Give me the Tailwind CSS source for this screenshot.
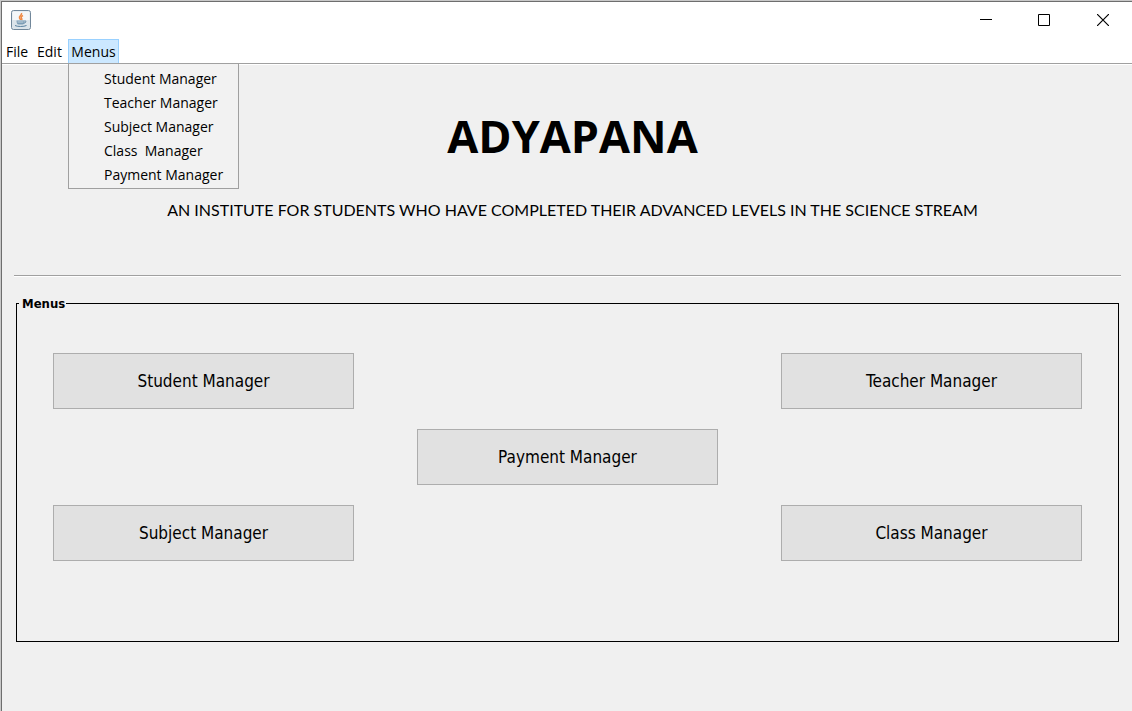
<!DOCTYPE html>
<html lang="en">
<head>
<meta charset="utf-8">
<title>Adyapana</title>
<script src="https://cdn.jsdelivr.net/npm/@tailwindcss/browser@4"></script>
</head>
<body class="min-h-screen bg-[#c8c8c8] pt-px pl-px text-black">
<div class="flex min-h-[calc(100vh-1px)] flex-col border-t border-l border-[#6e6e6e] bg-[#f0f0f0]">
  <header class="border-b border-[#a0a0a0] bg-white">
    <div class="flex h-[37px] items-center justify-between pb-[2px] pl-[9px]">
      <svg class="size-5" viewBox="0 0 20 20" fill="none" aria-label="Java" role="img">
        <rect x=".5" y=".5" width="19" height="19" rx="2" fill="#dce4ea" stroke="#71879a"/>
        <path d="M1.500 10V2.500a1 1 0 0 1 1-1h15a1 1 0 0 1 1 1V10z" fill="#f4f7f9"/>
        <path d="M10.500 3c1 2-3 3-2 5 .3.800 1 1.300 1 2M12 5.500c-2 1-2.300 2-1.300 3 .4.500.2 1-.2 1.500" stroke="#ef8a45" stroke-width="1.500"/>
        <path d="M5.500 10.500h8c0 2-.5 4-2 4h-4c-1.500 0-2-2-2-4z" fill="#7d9db5"/>
        <path d="M6.500 12h6" stroke="#c4d3de"/>
        <path d="M13.500 11c2-.5 2 1.800-.8 2.200M4 15.500c2 1.300 9 1.300 11.500 0" stroke="#58809f"/>
      </svg>
      <div class="flex">
        <button aria-label="Minimize" class="flex h-[35px] w-[59px] items-center justify-center"><svg class="size-3" viewBox="0 0 12 12"><path d="M0 5.500h12" stroke="#000"/></svg></button>
        <button aria-label="Maximize" class="flex h-[35px] w-[58px] items-center justify-center"><svg class="size-3" viewBox="0 0 12 12"><path d="M.5.5h11v11H.5z" fill="none" stroke="#000"/></svg></button>
        <button aria-label="Close" class="flex h-[35px] w-[59px] items-center justify-center"><svg class="size-3" viewBox="0 0 12 12"><path d="M0 0l12 12M12 0L0 12" stroke="#000" stroke-width="1.200"/></svg></button>
      </div>
    </div>
    <nav class="flex font-['Open_Sans',sans-serif] text-sm leading-6">
      <button class="h-6 w-[31px] pt-px pl-1 text-left leading-[23px]">File</button>
      <button class="h-6 w-[35px] pt-px pl-1 text-left leading-[23px]">Edit</button>
      <div class="relative">
        <button class="block h-6 w-[51px] border border-b-0 border-[#99d1ff] bg-[#cce8ff] leading-[23px]" aria-expanded="true">Menus</button>
        <div class="absolute top-6 left-0 flex w-[171px] flex-col border border-[#a0a0a0] bg-[#f2f2f2] pt-[3px] pb-px" role="menu">
          <button role="menuitem" class="pl-[35px] text-left">Student Manager</button>
          <button role="menuitem" class="pl-[35px] text-left">Teacher Manager</button>
          <button role="menuitem" class="pl-[35px] text-left">Subject Manager</button>
          <button role="menuitem" class="pl-[35px] text-left whitespace-pre">Class  Manager</button>
          <button role="menuitem" class="pl-[35px] text-left">Payment Manager</button>
        </div>
      </div>
    </nav>
  </header>
  <main class="flex flex-col border-t border-white pr-[11px] pl-3">
    <div class="pt-[35px] pb-[53px] pl-[10px] text-center">
      <h1 class="font-['Open_Sans',sans-serif] text-[45px] leading-[72px] font-bold">ADYAPANA</h1>
      <p class="pt-[26px] font-[Lato,sans-serif] text-base leading-6">AN INSTITUTE FOR STUDENTS WHO HAVE COMPLETED THEIR ADVANCED LEVELS IN THE SCIENCE STREAM</p>
    </div>
    <hr class="h-[2px] border-t border-b border-t-[#a0a0a0] border-b-white">
    <fieldset class="mx-[2px] mt-[17px] border border-black px-9 pt-[41px] pb-20 font-['DejaVu_Sans_Condensed','DejaVu_Sans',sans-serif]">
      <legend class="-ml-[34px] pt-[2px] pr-px pl-[3px] text-[13px] leading-4 font-bold">Menus</legend>
      <div class="grid grid-cols-[301px_1fr_301px] gap-y-5 text-[17px]">
        <button class="h-14 border border-[#adadad] bg-[#e1e1e1] pt-[2px]">Student Manager</button>
        <button class="col-start-3 h-14 border border-[#adadad] bg-[#e1e1e1] pt-[2px]">Teacher Manager</button>
        <button class="col-start-2 h-14 w-[301px] justify-self-center border border-[#adadad] bg-[#e1e1e1] pt-[2px]">Payment Manager</button>
        <button class="col-start-1 h-14 border border-[#adadad] bg-[#e1e1e1] pt-[2px]">Subject Manager</button>
        <button class="col-start-3 h-14 border border-[#adadad] bg-[#e1e1e1] pt-[2px]">Class Manager</button>
      </div>
    </fieldset>
  </main>
</div>
</body>
</html>
